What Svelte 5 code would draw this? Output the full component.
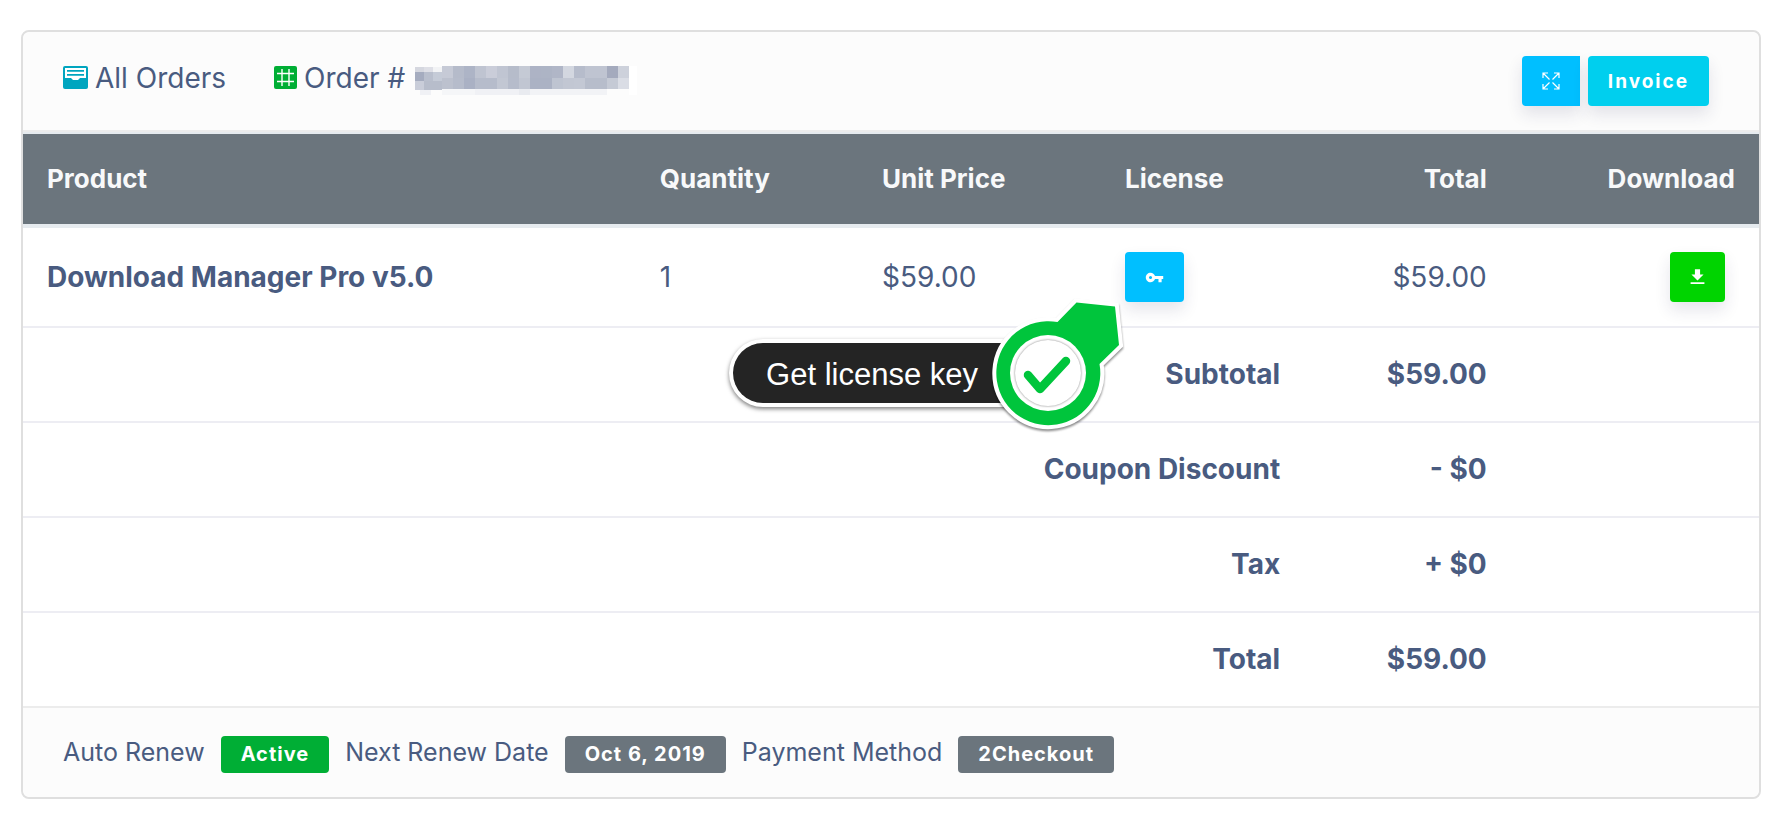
<script>
  const totals = [
    { label: 'Subtotal', value: '$59.00' },
    { label: 'Coupon Discount', value: '- $0' },
    { label: 'Tax', value: '+ $0' },
    { label: 'Total', value: '$59.00' }
  ];

  const renewal = [
    { label: 'Auto Renew', value: 'Active', active: true },
    { label: 'Next Renew Date', value: 'Oct 6, 2019' },
    { label: 'Payment Method', value: '2Checkout' }
  ];

  // Mosaic tiles covering the order number: x, y, width, height, colour
  const base = [
    '#c6cad6', '#b5bbca', '#adb4c6', '#bfc4d1', '#cacdd9', '#c0c5d2', '#b6bcca', '#c5cad5', '#adb3c5', '#adb4c5',
    '#b0b6c7', '#d3d7e0', '#b6bccb', '#bfc4d1', '#bfc4d1', '#a4aabd', '#cdd1db'
  ];
  const lower = [
    '#bcc1ce', '#b6bccb', '#aab1c4', '#b6bccb', '#b6bccb', '#c2c7d3', '#b6bccb', '#c1c6d2', '#abb2c4', '#abb2c4',
    '#bec4d1', '#c2c7d3', '#c3c8d4', '#b7bdcb', '#b7bdcb', '#c5cad5', '#dadde5'
  ];
  const tiles = [
    [0, 1, 9, 5, '#d5d7df'], [9, 1, 9, 5, '#dedfe6'], [18, 1, 9, 5, '#f2f3f5'],
    [0, 6, 9, 9, '#a5acbf'], [9, 6, 9, 9, '#b9bfcd'], [18, 6, 9, 9, '#c5cbd7'],
    [0, 15, 9, 9, '#c9cdd9'], [9, 15, 9, 9, '#b7bdcb'], [18, 15, 9, 9, '#b7bdcb'],
    ...base.map((c, i) => [27 + i * 11, 0, 11, 12, c]),
    ...lower.map((c, i) => [27 + i * 11, 12, 11, 11, c]),
    [5, 24, 11, 5, '#f0f1f5'], [27, 23, 33, 6, '#f5f6f8'], [60, 23, 44, 6, '#f0f1f5'],
    [104, 23, 11, 6, '#e9ebf0'], [115, 23, 77, 6, '#f2f3f6'], [214, 0, 8, 29, '#ffffff']
  ];
</script>

<main>
  <section class="card">
    <header>
      <nav>
        <a href="#orders">
          <svg class="icon" width="25" height="23" viewBox="0 0 25 23" aria-hidden="true">
            <rect width="25" height="23" rx="2" fill="#00a5bf" />
            <path d="M2 2h21v10h-6l-2 2h-5l-2-2H2z" fill="#fff" />
            <path d="M4 4.800h17M4 8.800h17" stroke="#00a5bf" stroke-width="1.700" />
          </svg>
          All Orders
        </a>
        <span class="order">
          <svg class="icon" width="23" height="23" viewBox="0 0 23 23" aria-hidden="true">
            <rect width="23" height="23" rx="2" fill="#00ae35" />
            <path d="M8 3v17M15 3v17M3 7.500h17M3 15.500h17" fill="none" stroke="#fff" stroke-width="1.400" />
          </svg>
          Order #
          <svg class="mosaic" width="222" height="29" viewBox="0 0 222 29" shape-rendering="crispEdges" aria-hidden="true">
            {#each tiles as [x, y, w, h, c]}
              <rect {x} {y} width={w} height={h} fill={c} />
            {/each}
          </svg>
        </span>
      </nav>
      <div class="actions">
        <button class="btn blue expand" aria-label="Expand">
          <svg width="18" height="18" viewBox="0 0 18 18" fill="none" stroke="#fff" stroke-width="1.2" aria-hidden="true">
            <path d="M1 6V1h5M12 1h5v5M17 12v5h-5M6 17H1v-5M1 1l6.500 6.500M17 1l-6.500 6.500M17 17l-6.500-6.500M1 17l6.500-6.500" />
          </svg>
        </button>
        <button class="btn cyan">Invoice</button>
      </div>
    </header>

    <table>
      <colgroup>
        <col class="c-product" /><col class="c-qty" /><col class="c-price" />
        <col class="c-license" /><col class="c-total" /><col class="c-download" />
      </colgroup>
      <thead>
        <tr>
          <th scope="col">Product</th>
          <th scope="col">Quantity</th>
          <th scope="col">Unit Price</th>
          <th scope="col">License</th>
          <th scope="col" class="right">Total</th>
          <th scope="col" class="right">Download</th>
        </tr>
      </thead>
      <tbody>
        <tr>
          <td class="strong">Download Manager Pro v5.0</td>
          <td>1</td>
          <td>$59.00</td>
          <td>
            <div class="license">
              <button class="btn blue" aria-label="License key">
                <svg width="19" height="19" viewBox="0 0 24 24" fill="#fff" aria-hidden="true">
                  <path d="M12.650 10C11.830 7.670 9.610 6 7 6c-3.310 0-6 2.690-6 6s2.690 6 6 6c2.610 0 4.830-1.670 5.650-4H17v4h4v-4h2v-4H12.650zM7 14c-1.100 0-2-.9-2-2s.9-2 2-2 2 .9 2 2-.9 2-2 2z" />
                </svg>
              </button>
              <div class="callout">
                <span>Get license key</span>
                <svg width="150" height="150" viewBox="0 0 150 150" aria-hidden="true">
                  <g class="pin">
                    <path d="M73.500 34 92.500 14.500 131 18.500 135 57 115.500 76A52 52 0 1 1 73.500 34Z" fill="#00c53c" stroke="#fff" stroke-width="8" stroke-linejoin="miter" paint-order="stroke" />
                  </g>
                  <circle cx="64" cy="85" r="38" fill="#fff" />
                  <circle class="inner" cx="64" cy="85" r="33" fill="#fff" />
                  <path d="M44 87 56 101 82 73" fill="none" stroke="#00c53c" stroke-width="8.500" stroke-linecap="round" stroke-linejoin="round" />
                </svg>
              </div>
            </div>
          </td>
          <td class="right">$59.00</td>
          <td class="right">
            <button class="btn green" aria-label="Download">
              <svg width="19" height="22" viewBox="0 0 22 24" fill="#fff" aria-hidden="true">
                <path d="M18 9h-4V3H8v6H4l7 7 7-7zM3 18v2h16v-2H3z" />
              </svg>
            </button>
          </td>
        </tr>
        {#each totals as row}
          <tr>
            <th scope="row" colspan="4" class="sum-label">{row.label}</th>
            <td class="right strong">{row.value}</td>
            <td></td>
          </tr>
        {/each}
      </tbody>
    </table>

    <footer>
      {#each renewal as r}
        <span>{r.label}</span>
        <span class="badge" class:active={r.active}>{r.value}</span>
      {/each}
    </footer>
  </section>
</main>

<style>
  :global(body) {
    margin: 0;
    background: #fff;
  }
  main {
    padding: 30px 27px 21px 21px;
    font-family: Inter, 'Open Sans', sans-serif;
    font-size: 28px;
    line-height: 45px;
    color: #495b80;
  }
  .card {
    border: 2px solid #dfdfdf;
    border-radius: 8px;
    background: #fff;
  }
  header {
    display: flex;
    justify-content: space-between;
    padding: 24px 50px 24px 40px;
    border-bottom: 2px solid #ececec;
    border-radius: 8px 8px 0 0;
    background: #fcfcfc;
  }
  nav {
    display: flex;
    gap: 48px;
  }
  nav a,
  .order {
    display: flex;
    align-items: center;
    gap: 7px;
    height: 45px;
    color: inherit;
    text-decoration: none;
  }
  .icon {
    margin-bottom: 2px;
  }
  .mosaic {
    margin: 4px 0 0 3px;
  }
  .actions {
    display: flex;
    gap: 8px;
  }
  .btn {
    display: inline-flex;
    align-items: center;
    justify-content: center;
    height: 50px;
    padding: 0 20px;
    border: 0;
    border-radius: 4px;
    color: #fff;
    font: 700 19px Inter, 'Open Sans', sans-serif;
    letter-spacing: 2px;
    box-shadow: 0 8px 16px rgba(40, 40, 90, 0.12);
    cursor: pointer;
    vertical-align: top;
  }
  .blue {
    background: #00bfff;
  }
  .expand {
    border-radius: 4px 0 0 4px;
  }
  .cyan {
    background: #00cfee;
  }
  .green {
    margin-right: 10px;
    padding: 0 18px;
    background: #00d400;
  }
  table {
    width: 100%;
    border-collapse: separate;
    border-spacing: 0;
    table-layout: fixed;
  }
  .c-product { width: 35.3%; }
  .c-qty { width: 12.8%; }
  .c-price { width: 14%; }
  .c-license { width: 11.7%; }
  .c-total { width: 11.9%; }
  .c-download { width: 14.3%; }
  th,
  td {
    padding: 24px;
    text-align: left;
    font-weight: 400;
    border-bottom: 2px solid #ededf3;
  }
  thead th {
    padding: 22px 24px 23px;
    background: #6b757d;
    color: #f8f9fa;
    font-size: 26px;
    font-weight: 700;
    border-top: 2px solid #e6ebef;
    border-bottom: 4px solid #e6ebef;
  }
  tbody tr:last-child > * {
    border-bottom-color: #ececec;
  }
  .strong,
  .sum-label {
    font-size: 28px;
    font-weight: 700;
  }
  .right,
  .sum-label {
    text-align: right;
  }
  .license {
    position: relative;
    height: 50px;
  }
  .callout {
    position: absolute;
    top: 91px;
    right: 100%;
    width: 392px;
    height: 60px;
  }
  footer {
    display: flex;
    align-items: center;
    gap: 16px;
    padding: 22px 40px;
    border-radius: 0 0 8px 8px;
    background: #fcfcfc;
    font-size: 25px;
  }
  .badge {
    margin-top: 4px;
    padding: 0 20px;
    border-radius: 4px;
    background: #6b757d;
    color: #fff;
    font-size: 20px;
    font-weight: 700;
    line-height: 37px;
    letter-spacing: 1px;
  }
  .active {
    background: #00ae35;
  }
  .callout span {
    display: block;
    width: 270px;
    box-sizing: border-box;
    padding: 3px 0 0 33px;
    border-radius: 30px 0 0 30px;
    background: #242424;
    color: #fff;
    font: 400 31px/57px 'Liberation Sans', sans-serif;
    box-shadow: 0 0 0 4px #fff, 0 2px 4px 4px rgba(0, 0, 0, 0.5);
  }
  .callout svg {
    position: absolute;
    left: 251px;
    top: -55px;
  }
  .pin {
    filter: drop-shadow(0 2px 1px rgba(0, 0, 0, 0.45));
  }
  .inner {
    filter: drop-shadow(0 0 1px rgba(0, 0, 0, 0.5));
  }
</style>
